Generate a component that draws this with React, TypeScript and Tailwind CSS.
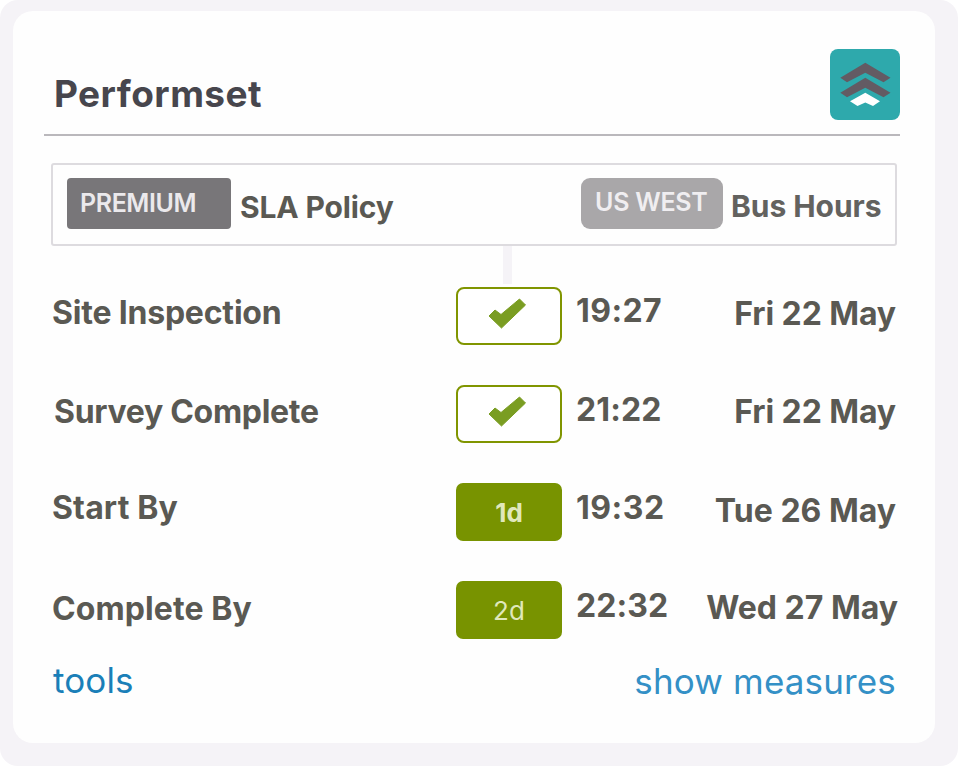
import React from "react";

type Row = {
  label: string;
  labelClass: string;
  badge: string | null;
  badgeClass: string;
  time: string;
  timeClass: string;
  date: string;
  dateClass: string;
};

const rows: Row[] = [
  {
    label: "Site Inspection",
    labelClass: "ml-0 -mt-[3px] tracking-[-0.2px]",
    badge: null,
    badgeClass: "",
    time: "19:27",
    timeClass: "-mt-[5px] tracking-[0.4px]",
    date: "Fri 22 May",
    dateClass: "tracking-[-0.1px] mr-[2px] -mt-[2px]",
  },
  {
    label: "Survey Complete",
    labelClass: "ml-[2px] -mt-[2px] tracking-[-0.3px]",
    badge: null,
    badgeClass: "",
    time: "21:22",
    timeClass: "-mt-[4px] tracking-[0.1px]",
    date: "Fri 22 May",
    dateClass: "tracking-[-0.1px] mr-[2px] -mt-[2px]",
  },
  {
    label: "Start By",
    labelClass: "ml-0 -mt-[4px] tracking-[0.15px]",
    badge: "1d",
    badgeClass: "font-bold",
    time: "19:32",
    timeClass: "-mt-[4px] tracking-[0.5px]",
    date: "Tue 26 May",
    dateClass: "mr-[2px] -mt-[1px]",
  },
  {
    label: "Complete By",
    labelClass: "ml-0 -mt-[1px] tracking-[0.1px]",
    badge: "2d",
    badgeClass: "font-normal",
    time: "22:32",
    timeClass: "-mt-[4px] tracking-[0.1px]",
    date: "Wed 27 May",
    dateClass: "mr-0 -mt-[2px]",
  },
];

function Logo() {
  return (
    <svg className="mt-[38px] h-[71px] w-[70px]" viewBox="0 0 70 71">
      <rect width="70" height="71" rx="8" fill="#2ea9ac" />
      <path d="M35.3 13.7 L60.5 28.8 L53.5 33.3 L35.3 23.8 L17 33.3 L10.3 28.8Z" fill="#635b63" />
      <path d="M35.3 28.7 L60.5 43.8 L53.5 48.3 L35.3 38.8 L17 48.3 L10.3 43.8Z" fill="#635b63" />
      <path d="M35.3 43.7 L50 52.3 L43 57 L35.3 53.5 L27.5 57 L20 52.3Z" fill="#ffffff" />
    </svg>
  );
}

function Check() {
  return (
    <svg className="mt-[8px] ml-[28px] h-[36px] w-[44px]" viewBox="0 0 44 36">
      <path
        d="M3 19 L9 13 L15 17.5 L33.5 2 L39.5 8 L15.5 31Z"
        fill="#7a9d22"
        stroke="#7a9d22"
        strokeWidth="1"
        strokeLinejoin="round"
      />
    </svg>
  );
}

export default function App() {
  return (
    <div className="h-[766px] w-[958px] rounded-[18px] bg-[#f5f3f7] pt-[11px] pl-[13px] font-['Inter',sans-serif] whitespace-nowrap text-[#5a5953]">
      <div className="flex h-[732px] w-[922px] flex-col rounded-[20px] bg-[#fefefe]">
        <header className="ml-[31px] flex h-[125px] w-[856px] shrink-0 items-start justify-between border-b-[2px] border-[#bab8bc] pl-[10px]">
          <h1 className="mt-[63px] text-[37px] leading-[40px] font-bold tracking-[0.45px] text-[#47464d]">Performset</h1>
          <Logo />
        </header>

        <section className="mt-[27px] ml-[38px] flex h-[83px] w-[846px] shrink-0 items-start rounded-[3px] border-[2px] border-[#dddbdf] pt-[13px] pl-[14px]">
          <div className="h-[51px] w-[164px] rounded-[4px] bg-[#787679] pl-[13px] text-[25px] leading-[50px] font-semibold tracking-[-0.4px] text-[#ebe9ec]">
            PREMIUM
          </div>
          <div className="mt-[3px] ml-[9px] text-[30px] leading-[52px] font-bold tracking-[-0.15px]">SLA Policy</div>
          <div className="ml-auto h-[51px] w-[142px] rounded-[9px] bg-[#a9a7a9] pl-[14px] text-[25px] leading-[48px] font-semibold tracking-[-0.25px] text-[#f0eef1]">
            US WEST
          </div>
          <div className="mt-[2px] mr-[14px] ml-[8px] w-[150px] text-[30px] leading-[52px] font-bold tracking-[-0.05px] text-[#63625f]">
            Bus Hours
          </div>
        </section>

        <div className="ml-[490px] h-[38px] w-[9px] shrink-0 bg-[#f5f3f7]" />

        <main className="mt-[3px] ml-[39px] flex w-[846px] shrink-0 flex-col gap-[40px]">
          {rows.map((row) => (
            <div key={row.label} className="flex h-[58px] items-start text-[32px] leading-[58px] font-bold">
              <div className="w-[404px]">
                <div className={row.labelClass}>{row.label}</div>
              </div>
              {row.badge === null ? (
                <div className="h-[58px] w-[106px] rounded-[8px] border-[2px] border-[#809500] bg-white">
                  <Check />
                </div>
              ) : (
                <div
                  className={
                    "h-[58px] w-[106px] rounded-[7px] bg-[#789300] text-center text-[26px] leading-[60px] text-[#e0e8bb] " +
                    row.badgeClass
                  }
                >
                  {row.badge}
                </div>
              )}
              <div className={"ml-[14px] " + row.timeClass}>{row.time}</div>
              <div className={"ml-auto " + row.dateClass}>{row.date}</div>
            </div>
          ))}
        </main>

        <footer className="mt-[20px] ml-[40px] flex w-[843px] justify-between text-[35px] leading-[42px]">
          <a className="tracking-[0.1px] text-[#1a7fb8]">tools</a>
          <a className="mt-[1px] tracking-[0.15px] text-[#3490c6]">show measures</a>
        </footer>
      </div>
    </div>
  );
}
